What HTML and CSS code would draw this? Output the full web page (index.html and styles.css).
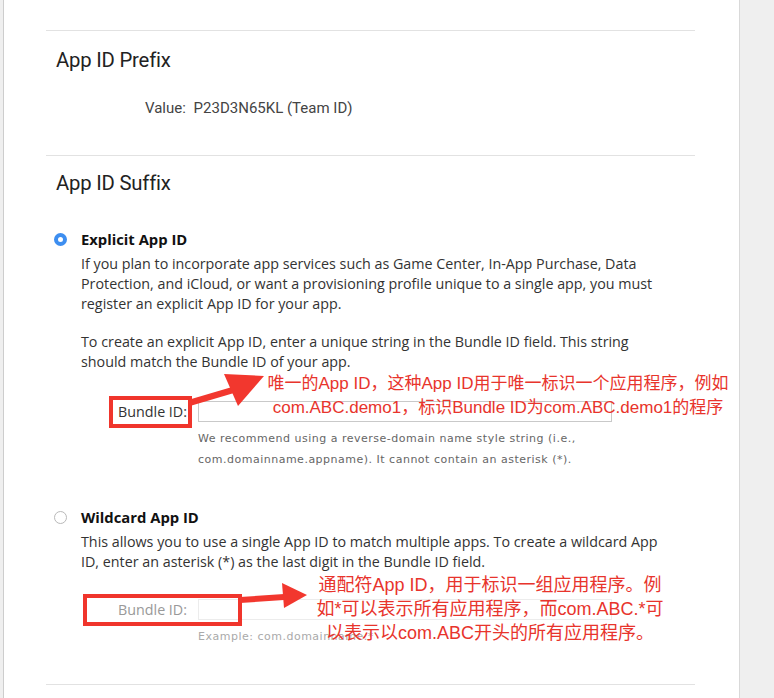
FILE: index.html
```html
<!DOCTYPE html>
<html lang="en">
<head>
<meta charset="utf-8">
<title>App ID</title>
<link rel="stylesheet" href="styles.css">
</head>
<body>
<div class="panel">
  <section class="block">
    <h2 class="block-title">App ID Prefix</h2>
    <p class="value-row"><span class="value-label">Value:</span> P23D3N65KL (Team ID)</p>
  </section>

  <section class="block">
    <h2 class="block-title title-suffix">App ID Suffix</h2>

    <div class="option option-first">
      <div class="option-head">
        <span class="radio radio-on"></span>
        <span class="option-name">Explicit App ID</span>
      </div>
      <div class="option-body">
        <p class="desc">If you plan to incorporate app services such as Game Center, In-App Purchase, Data Protection, and iCloud, or want a provisioning profile unique to a single app, you must register an explicit App ID for your app.</p>
        <p class="desc desc-gap">To create an explicit App ID, enter a unique string in the Bundle ID field. This string should match the Bundle ID of your app.</p>
      </div>
      <div class="field-row">
        <label class="field-label">Bundle ID:</label>
        <span class="field-input"></span>
      </div>
      <p class="hint">We recommend using a reverse-domain name style string (i.e.,<br>com.domainname.appname). It cannot contain an asterisk (*).</p>
    </div>

    <div class="option option-second">
      <div class="option-head">
        <span class="radio"></span>
        <span class="option-name">Wildcard App ID</span>
      </div>
      <div class="option-body">
        <p class="desc">This allows you to use a single App ID to match multiple apps. To create a wildcard App ID, enter an asterisk (*) as the last digit in the Bundle ID field.</p>
      </div>
      <div class="field-row field-row-2">
        <label class="field-label field-label-dim">Bundle ID:</label>
        <span class="field-input field-input-dim"></span>
      </div>
      <p class="hint hint-dim">Example: com.domainname.*</p>
    </div>
  </section>

  <div class="block block-end"></div>
</div>

<div class="note-box note-box-1"></div>
<svg class="arrow arrow-1" width="90" height="60" viewBox="0 0 90 60">
  <polygon points="0,30 44,17 46,23 2,36" fill="#f2372e"/>
  <polygon points="36,4 76,6 50,36" fill="#f2372e"/>
</svg>
<p class="note note-1">唯一的App ID，这种App ID用于唯一标识一个应用程序，例如<br>com.ABC.demo1，标识Bundle ID为com.ABC.demo1的程序</p>

<div class="note-box note-box-2"></div>
<svg class="arrow arrow-2" width="80" height="40" viewBox="0 0 80 40">
  <polygon points="0,15 44,12 44,18 0,21" fill="#f2372e"/>
  <polygon points="42,1 67,13 44,26" fill="#f2372e"/>
</svg>
<p class="note note-2">通配符App ID，用于标识一组应用程序。例<br>如*可以表示所有应用程序，而com.ABC.*可<br>以表示以com.ABC开头的所有应用程序。</p>
</body>
</html>
```

FILE: styles.css
```css
html, body {
  margin: 0;
  padding: 0;
}
body {
  background: #efefef;
  font-family: "Open Sans", "DejaVu Sans", sans-serif;
  color: #333;
  width: 774px;
  height: 698px;
  overflow: hidden;
  position: relative;
}
.panel {
  margin-left: 3px;
  width: 737px;
  height: 698px;
  background: #fff;
  border-left: 1px solid #cdcdcd;
  border-right: 1px solid #d9d9d9;
  padding-top: 30px;
  box-sizing: border-box;
}
.block {
  margin-left: 42px;
  width: 649px;
  border-top: 1px solid #e2e2e2;
}
.block-title {
  margin: 17px 0 0 10px;
  font-family: "Roboto", sans-serif;
  font-weight: 400;
  font-size: 20.3px;
  line-height: 24px;
  color: #222;
  letter-spacing: -0.2px;
}
.value-row {
  margin: 26px 0 0 99px;
  font-family: "Roboto", sans-serif;
  font-size: 15px;
  line-height: 20px;
  color: #444;
  height: 20px;
  white-space: pre;
}
.value-label {
  margin-right: 4px;
}
.block + .block {
  margin-top: 37px;
}
.title-suffix {
  margin-top: 15px;
}
.option-first {
  margin-top: 34px;
}
.option-second {
  margin-top: 37px;
}
.option-head {
  display: flex;
  align-items: center;
  height: 20px;
  margin-left: 8px;
}
.radio {
  width: 13px;
  height: 13px;
  border: 1px solid #b9b9b9;
  border-radius: 50%;
  background: #fff;
  box-sizing: border-box;
  margin-right: 14px;
}
.radio-on {
  border: 4px solid #3d8ef0;
  background: #fff;
}
.option-name {
  font-weight: 700;
  font-size: 14.8px;
  color: #111;
}
.option-body {
  margin: 5px 0 0 35px;
  width: 590px;
}
.desc {
  margin: 0;
  font-size: 14.3px;
  line-height: 20px;
  color: #333;
}
.desc-gap {
  margin-top: 18px;
}
.field-row {
  display: flex;
  align-items: center;
  margin: 29px 0 0 35px;
  height: 21px;
}
.field-row-2 {
  margin-top: 27px;
}
.field-label {
  width: 117px;
  text-align: right;
  padding-right: 11px;
  box-sizing: border-box;
  font-size: 14.3px;
  color: #333;
}
.field-label-dim {
  color: #999;
}
.field-input {
  width: 414px;
  height: 21px;
  border: 1px solid #c9c9c9;
  box-sizing: border-box;
  background: #fff;
}
.field-input-dim {
  border-color: #ececec;
}
.hint {
  margin: 6px 0 0 152px;
  font-family: "DejaVu Sans", sans-serif;
  font-size: 11px;
  letter-spacing: 0.5px;
  line-height: 21px;
  color: #666;
}
.hint-dim {
  color: #aaa;
  margin-top: 6px;
}
.block-end {
  margin-top: 38px;
}

/* annotations overlay */
.note-box {
  position: absolute;
  border: 4px solid #f0352c;
  box-sizing: border-box;
}
.note-box-1 {
  left: 109px;
  top: 396px;
  width: 83px;
  height: 32px;
}
.note-box-2 {
  left: 83px;
  top: 594px;
  width: 159px;
  height: 32px;
}
.arrow {
  position: absolute;
}
.arrow-1 {
  left: 188px;
  top: 370px;
}
.arrow-2 {
  left: 240px;
  top: 582px;
}
.note {
  position: absolute;
  margin: 0;
  font-family: "Liberation Sans", "Noto Sans CJK SC", sans-serif;
  color: #e8342c;
  line-height: 24px;
  text-align: center;
  white-space: nowrap;
}
.note-1 {
  font-size: 17px;
  left: 258px;
  top: 372px;
  width: 480px;
}
.note-2 {
  font-size: 18px;
  left: 300px;
  top: 573px;
  width: 380px;
}
```
